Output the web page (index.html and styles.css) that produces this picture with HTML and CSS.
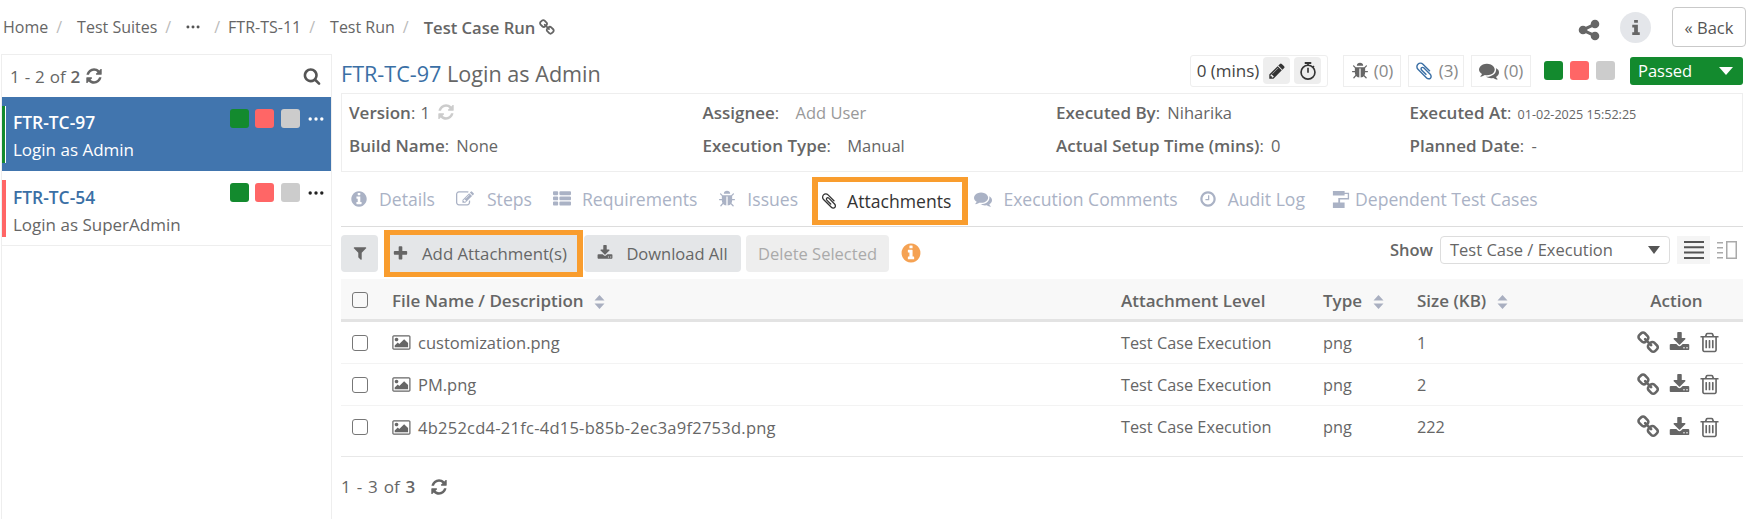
FILE: index.html
```html
<!DOCTYPE html>
<html lang="en">
<head>
    <meta charset="UTF-8">
    <title>Test Case Run</title>
    <link rel="stylesheet" href="styles.css">
</head>
<body>
    <svg class="sprite" xmlns="http://www.w3.org/2000/svg">
        <symbol id="i-search" viewBox="0 0 1792 1792"><path d="M1216 832q0-185-131.5-316.5t-316.5-131.5-316.5 131.5-131.5 316.5 131.5 316.5 316.5 131.5 316.5-131.5 131.5-316.5zm512 832q0 52-38 90t-90 38q-54 0-90-38l-343-342q-179 124-399 124-143 0-273.5-55.5t-225-150-150-225-55.5-273.5 55.5-273.5 150-225 225-150 273.5-55.5 273.5 55.5 225 150 150 225 55.5 273.5q0 220-124 399l343 343q37 37 37 90z"/></symbol>
        <symbol id="i-info" viewBox="0 0 1792 1792"><path d="M1152 1376v-160q0-14-9-23t-23-9h-96v-512q0-14-9-23t-23-9h-320q-14 0-23 9t-9 23v160q0 14 9 23t23 9h96v320h-96q-14 0-23 9t-9 23v160q0 14 9 23t23 9h448q14 0 23-9t9-23zm-128-896v-160q0-14-9-23t-23-9h-192q-14 0-23 9t-9 23v160q0 14 9 23t23 9h192q14 0 23-9t9-23zm640 416q0 209-103 385.5t-279.5 279.5-385.5 103-385.5-103-279.5-279.5-103-385.5 103-385.5 279.5-279.5 385.5-103 385.5 103 279.5 279.5 103 385.5z"/></symbol>
        <symbol id="i-letter" viewBox="0 0 10 16"><path d="M3 0h4v3H3zM1 5h6v8h2v3H1v-3h2V8H1z"/></symbol>
        <symbol id="i-refresh" viewBox="0 0 1792 1792"><path d="M1639 1056q0 5-1 7-64 268-268 434.5t-478 166.5q-146 0-282.5-55t-243.5-157l-129 129q-19 19-45 19t-45-19-19-45v-448q0-26 19-45t45-19h448q26 0 45 19t19 45-19 45l-137 137q71 66 161 102t187 36q134 0 250-65t186-179q11-17 53-117 8-23 30-23h192q13 0 22.5 9.5t9.5 22.5zm25-800v448q0 26-19 45t-45 19h-448q-26 0-45-19t-19-45 19-45l138-138q-148-137-349-137-134 0-250 65t-186 179q-11 17-53 117-8 23-30 23h-199q-13 0-22.5-9.5t-9.5-22.5v-7q65-268 270-434.5t480-166.5q146 0 284 55.5t245 156.5l130-129q19-19 45-19t45 19 19 45z"/></symbol>
        <symbol id="i-plus" viewBox="0 0 1792 1792"><path d="M1600 736v192q0 40-28 68t-68 28h-416v416q0 40-28 68t-68 28h-192q-40 0-68-28t-28-68v-416h-416q-40 0-68-28t-28-68v-192q0-40 28-68t68-28h416v-416q0-40 28-68t68-28h192q40 0 68 28t28 68v416h416q40 0 68 28t28 68z"/></symbol>
        <symbol id="i-filter" viewBox="0 0 1792 1792"><path d="M1595 295q17 41-14 70l-493 493v742q0 42-39 59-13 5-25 5-27 0-45-19l-256-256q-19-19-19-45v-486l-493-493q-31-29-14-70 17-39 59-39h1280q42 0 59 39z"/></symbol>
        <symbol id="i-download" viewBox="0 0 1792 1792"><path d="M1344 1344q0-26-19-45t-45-19-45 19-19 45 19 45 45 19 45-19 19-45zm256 0q0-26-19-45t-45-19-45 19-19 45 19 45 45 19 45-19 19-45zm128-224v320q0 40-28 68t-68 28h-1472q-40 0-68-28t-28-68v-320q0-40 28-68t68-28h465l135 136q58 56 136 56t136-56l136-136h464q40 0 68 28t28 68zm-325-569q17 41-14 70l-448 448q-18 19-45 19t-45-19l-448-448q-31-29-14-70 17-39 59-39h256v-448q0-26 19-45t45-19h256q26 0 45 19t19 45v448h256q42 0 59 39z"/></symbol>
        <symbol id="i-share" viewBox="0 0 1792 1792"><path d="M1344 1024q133 0 226.5 93.5t93.5 226.5-93.5 226.5-226.5 93.5-226.5-93.5-93.5-226.5q0-12 2-34l-360-180q-92 86-218 86-133 0-226.5-93.5t-93.5-226.5 93.5-226.5 226.5-93.5q126 0 218 86l360-180q-2-22-2-34 0-133 93.5-226.5t226.5-93.5 226.5 93.5 93.5 226.5-93.5 226.5-226.5 93.5q-126 0-218-86l-360 180q2 22 2 34t-2 34l360 180q92-86 218-86z"/></symbol>
        <symbol id="i-pencil" viewBox="0 0 1792 1792"><path d="M491 1536l91-91-235-235-91 91v107h128v128h107zm523-928q0-22-22-22-10 0-17 7l-542 542q-7 7-7 17 0 22 22 22 10 0 17-7l542-542q7-7 7-17zm-54-192l416 416-832 832h-416v-416zm683 96q0 53-37 90l-166 166-416-416 166-165q36-38 90-38 53 0 91 38l235 234q37 39 37 91z"/></symbol>
        <symbol id="i-bug" viewBox="0 0 1792 1792"><path d="M1696 960q0 26-19 45t-45 19h-224q0 171-67 290l208 209q19 19 19 45t-19 45q-18 19-45 19t-45-19l-198-197q-5 5-15 13t-42 28.5-65 36.5-82 29-97 13v-896h-128v896q-51 0-101.5-13.5t-87-33-66-39-43.5-32.5l-15-14-183 207q-20 21-48 21-24 0-43-16-19-18-20.5-44.5t15.5-46.5l202-227q-58-114-58-274h-224q-26 0-45-19t-19-45 19-45 45-19h224v-294l-173-173q-19-19-19-45t19-45 45-19 45 19l173 173h844l173-173q19-19 45-19t45 19 19 45-19 45l-173 173v294h224q26 0 45 19t19 45zm-480-576h-640q0-133 93.5-226.5t226.5-93.5 226.5 93.5 93.5 226.5z"/></symbol>
        <symbol id="i-clip" viewBox="0 0 1792 1792"><path d="M1596 1385q0 117-79 196t-196 79q-135 0-235-100l-777-776q-113-115-113-271 0-159 110-270t269-111q158 0 273 113l605 606q10 10 10 22 0 16-30.5 46.5t-46.5 30.5q-13 0-23-10l-606-607q-79-77-181-77-106 0-179 75t-73 181q0 105 76 181l776 777q63 63 145 63 64 0 106-42t42-106q0-82-63-145l-581-581q-26-24-60-24-29 0-48 19t-19 48q0 32 25 59l410 410q10 10 10 22 0 16-31 47t-47 31q-12 0-22-10l-410-410q-63-61-63-149 0-82 57-139t139-57q88 0 149 63l581 581q100 98 100 235z"/></symbol>
        <symbol id="i-comments" viewBox="0 0 1792 1792"><path d="M1408 768q0 139-94 257t-256.5 186.5-353.5 68.5q-86 0-176-16-124 88-278 128-36 9-86 16h-3q-11 0-20.5-8t-11.5-21q-1-3-1-6.5t.5-6.5 2-6l2.5-5 3.5-5.5 4-5 4.5-5 4-4.5q5-6 23-25t26-29.5 22.5-29 25-38.5 20.5-44q-124-72-195-177t-71-224q0-139 94-257t256.5-186.5 353.5-68.5 353.5 68.5 256.5 186.5 94 257zm384 256q0 120-71 224.5t-195 176.5q10 24 20.5 44t25 38.5 22.5 29 26 29.5 23 25q1 1 4 4.5t4.5 5 4 5 3.5 5.5l2.5 5 2 6 .5 6.5-1 6.5q-3 14-13 22t-22 7q-50-7-86-16-154-40-278-128-90 16-176 16-271 0-472-132 58 4 88 4 161 0 309-45t264-129q125-92 192-212t67-254q0-77-23-152 129 71 204 178t75 230z"/></symbol>
        <symbol id="i-edit" viewBox="0 0 1792 1792"><path d="M888 1184l116-116-152-152-116 116v56h96v96h56zm440-720q-16-16-33 1l-350 350q-17 17-1 33t33-1l350-350q17-17 1-33zm80 594v190q0 119-84.5 203.5t-203.5 84.5h-832q-119 0-203.5-84.5t-84.5-203.5v-832q0-119 84.5-203.5t203.5-84.5h832q63 0 117 25 15 7 18 23 3 17-9 29l-49 49q-14 14-32 8-23-6-45-6h-832q-66 0-113 47t-47 113v832q0 66 47 113t113 47h832q66 0 113-47t47-113v-126q0-13 9-22l64-64q15-15 35-7t20 29zm-96-738l288 288-672 672h-288v-288zm444 132l-92 92-288-288 92-92q28-28 68-28t68 28l152 152q28 28 28 68t-28 68z"/></symbol>
        <symbol id="i-thlist" viewBox="0 0 1792 1792"><path d="M512 1248v192q0 40-28 68t-68 28h-320q-40 0-68-28t-28-68v-192q0-40 28-68t68-28h320q40 0 68 28t28 68zm0-512v192q0 40-28 68t-68 28h-320q-40 0-68-28t-28-68v-192q0-40 28-68t68-28h320q40 0 68 28t28 68zm1280 512v192q0 40-28 68t-68 28h-960q-40 0-68-28t-28-68v-192q0-40 28-68t68-28h960q40 0 68 28t28 68zm-1280-1024v192q0 40-28 68t-68 28h-320q-40 0-68-28t-28-68v-192q0-40 28-68t68-28h320q40 0 68 28t28 68zm1280 512v192q0 40-28 68t-68 28h-960q-40 0-68-28t-28-68v-192q0-40 28-68t68-28h960q40 0 68 28t28 68zm0-512v192q0 40-28 68t-68 28h-960q-40 0-68-28t-28-68v-192q0-40 28-68t68-28h960q40 0 68 28t28 68z"/></symbol>
        <symbol id="i-clock" viewBox="0 0 1792 1792"><path d="M1024 544v448q0 14-9 23t-23 9h-320q-14 0-23-9t-9-23v-64q0-14 9-23t23-9h224v-352q0-14 9-23t23-9h64q14 0 23 9t9 23zm416 352q0-148-73-273t-198-198-273-73-273 73-198 198-73 273 73 273 198 198 273 73 273-73 198-198 73-273zm224 0q0 209-103 385.5t-279.5 279.5-385.5 103-385.5-103-279.5-279.5-103-385.5 103-385.5 279.5-279.5 385.5-103 385.5 103 279.5 279.5 103 385.5z"/></symbol>
        <symbol id="i-image" viewBox="0 0 1920 1792"><path d="M576 576q0 80-56 136t-136 56-136-56-56-136 56-136 136-56 136 56 56 136zm1024 384v448h-1408v-192l320-320 160 160 512-512zm96-704h-1600q-13 0-22.5 9.5t-9.5 22.5v1216q0 13 9.5 22.5t22.5 9.5h1600q13 0 22.5-9.5t9.5-22.5v-1216q0-13-9.5-22.5t-22.5-9.5zm160 32v1216q0 66-47 113t-113 47h-1600q-66 0-113-47t-47-113v-1216q0-66 47-113t113-47h1600q66 0 113 47t47 113z"/></symbol>
        <symbol id="i-trash" viewBox="0 0 1792 1792"><path d="M704 736v576q0 14-9 23t-23 9h-64q-14 0-23-9t-9-23v-576q0-14 9-23t23-9h64q14 0 23 9t9 23zm256 0v576q0 14-9 23t-23 9h-64q-14 0-23-9t-9-23v-576q0-14 9-23t23-9h64q14 0 23 9t9 23zm256 0v576q0 14-9 23t-23 9h-64q-14 0-23-9t-9-23v-576q0-14 9-23t23-9h64q14 0 23 9t9 23zm128 724v-948h-896v948q0 22 7 40.5t14.5 27 10.5 8.5h832q3 0 10.5-8.5t14.5-27 7-40.5zm-672-1076h448l-48-117q-7-9-17-11h-317q-10 2-17 11zm928 32v64q0 14-9 23t-23 9h-96v948q0 83-47 143.5t-113 60.5h-832q-66 0-113-58.5t-47-141.5v-952h-96q-14 0-23-9t-9-23v-64q0-14 9-23t23-9h309l70-167q15-37 54-63t79-26h320q40 0 79 26t54 63l70 167h309q14 0 23 9t9 23z"/></symbol>
        <symbol id="i-link" viewBox="0 0 1792 1792"><path d="M1456 1216q0-40-28-68l-208-208q-28-28-68-28-42 0-72 32 3 3 19 18.5t21.5 21.5 15 19 13 25.5 3.5 27.5q0 40-28 68t-68 28q-15 0-27.5-3.5t-25.5-13-19-15-21.5-21.5-18.5-19q-33 31-33 73 0 40 28 68l206 207q27 27 68 27 40 0 68-26l147-146q28-28 28-67zm-703-705q0-40-28-68l-206-207q-28-28-68-28-39 0-68 27l-147 146q-28 28-28 67 0 40 28 68l208 208q27 27 68 27 42 0 72-31-3-3-19-18.5t-21.5-21.5-15-19-13-25.5-3.5-27.5q0-40 28-68t68-28q15 0 27.5 3.5t25.5 13 19 15 21.5 21.5 18.5 19q33-31 33-73zm895 705q0 120-85 203l-147 146q-83 83-203 83-121 0-204-85l-206-207q-83-83-83-203 0-123 88-209l-88-88q-86 88-208 88-120 0-204-84l-208-208q-84-84-84-204t85-203l147-146q83-83 203-83 121 0 204 85l206 207q83 83 83 203 0 123-88 209l88 88q86-88 208-88 120 0 204 84l208 208q84 84 84 204z"/></symbol>
        <symbol id="i-dots" viewBox="0 0 16 6"><circle cx="2.200" cy="3" r="1.700"/><circle cx="8" cy="3" r="1.700"/><circle cx="13.800" cy="3" r="1.700"/></symbol>
        <symbol id="i-sort" viewBox="0 0 10 14"><path d="M5 0l5 5.500H0zM5 14L0 8.500h10z"/></symbol>
        <symbol id="i-timer" viewBox="0 0 20 22"><path d="M6 0h8v2.500H6zM9 2h2v2H9z"/><path d="M16.500 4.300l1.500 1.500-1.300 1.300-1.500-1.500z"/><path fill-rule="evenodd" d="M10 3a9.500 9.500 0 1 0 0 19 9.500 9.500 0 0 0 0-19zm0 2a7.500 7.500 0 1 1 0 15 7.500 7.500 0 0 1 0-15z"/><path d="M9 7h2v6H9z"/></symbol>
        <symbol id="i-flow" viewBox="0 0 18 20"><path d="M0 1h13v5H0zM13 3h5v7.500H6V9h10.500V4.500H13zM6 10h2v4H6zM0 14h13v6H0z"/></symbol>
        <symbol id="i-lines" viewBox="0 0 20 18"><path d="M0 0h20v2H0zM0 5.300h20v2H0zM0 10.600h20v2H0zM0 16h20v2H0z"/></symbol>
        <symbol id="i-split" viewBox="0 0 20 18"><path d="M0 1h6v1.500H0zM0 6h6v1.500H0zM0 11h6v1.500H0zM0 16h6v1.500H0z"/><path fill-rule="evenodd" d="M9 0h11v18H9zm1.500 1.500v15h8v-15z"/></symbol>
    </svg>

    <header class="topbar">
        <nav class="crumbs">
            <a>Home</a><span class="sep">/</span>
            <a>Test Suites</a><span class="sep">/</span>
            <svg class="ic crumb-dots"><use href="#i-dots"/></svg><span class="sep sep-tight">/</span>
            <a>FTR-TS-11</a><span class="sep">/</span>
            <a>Test Run</a><span class="sep">/</span>
            <b>Test Case Run</b>
            <svg class="ic crumb-link"><use href="#i-link"/></svg>
        </nav>
        <div class="top-actions">
            <svg class="ic share"><use href="#i-share"/></svg>
            <span class="round-info"><svg class="ic"><use href="#i-letter"/></svg></span>
            <button class="back-btn">« Back</button>
        </div>
    </header>

    <div class="layout">
        <aside class="sidebar">
            <div class="side-head">
                <span>1 - 2 of <b>2</b> <svg class="ic side-refresh"><use href="#i-refresh"/></svg></span>
                <svg class="ic side-search"><use href="#i-search"/></svg>
            </div>
            <div class="case active">
                <span class="stripe stripe-pass"></span>
                <div class="case-text">
                    <a class="case-key">FTR-TC-97</a>
                    <span class="case-name">Login as Admin</span>
                </div>
                <div class="case-marks">
                    <span class="sq sq-green"></span><span class="sq sq-red"></span><span class="sq sq-grey"></span>
                    <svg class="ic case-dots"><use href="#i-dots"/></svg>
                </div>
            </div>
            <div class="case">
                <span class="stripe stripe-fail"></span>
                <div class="case-text">
                    <a class="case-key">FTR-TC-54</a>
                    <span class="case-name">Login as SuperAdmin</span>
                </div>
                <div class="case-marks">
                    <span class="sq sq-green"></span><span class="sq sq-red"></span><span class="sq sq-grey"></span>
                    <svg class="ic case-dots"><use href="#i-dots"/></svg>
                </div>
            </div>
        </aside>

        <main class="content">
            <div class="title-row">
                <h1><a>FTR-TC-97</a> Login as Admin</h1>
                <div class="title-tools">
                    <div class="mins-box">
                        <span>0 (mins)</span>
                        <span class="mini-btn"><svg class="ic"><use href="#i-pencil"/></svg></span>
                        <span class="mini-btn"><svg class="ic"><use href="#i-timer"/></svg></span>
                    </div>
                    <span class="count-box box-bug"><svg class="ic"><use href="#i-bug"/></svg> (0)</span>
                    <span class="count-box box-clip"><svg class="ic ic-blue"><use href="#i-clip"/></svg> (3)</span>
                    <span class="count-box box-comment"><svg class="ic"><use href="#i-comments"/></svg> (0)</span>
                    <div class="status-squares">
                        <span class="sq sq-green"></span><span class="sq sq-red"></span><span class="sq sq-grey"></span>
                    </div>
                    <div class="status-select">Passed <span class="caret-white"></span></div>
                </div>
            </div>

            <section class="info-box">
                <div><b>Version</b>: <span class="val val-version">1</span> <svg class="ic ver-refresh"><use href="#i-refresh"/></svg></div>
                <div><b>Assignee</b>: <span class="val val-light">Add User</span></div>
                <div><b>Executed By</b>: <span class="val val-gap">Niharika</span></div>
                <div><b>Executed At</b>: <span class="val val-small">01-02-2025 15:52:25</span></div>
                <div><b>Build Name</b>: <span class="val val-gap">None</span></div>
                <div><b>Execution Type</b>: <span class="val val-type">Manual</span></div>
                <div><b>Actual Setup Time (mins)</b>: <span class="val val-gap">0</span></div>
                <div><b>Planned Date</b>: <span class="val val-gap">-</span></div>
            </section>

            <nav class="tabs">
                <a class="tab"><svg class="ic"><use href="#i-info"/></svg>Details</a>
                <a class="tab tab-steps"><svg class="ic"><use href="#i-edit"/></svg>Steps</a>
                <a class="tab"><svg class="ic"><use href="#i-thlist"/></svg>Requirements</a>
                <a class="tab"><svg class="ic"><use href="#i-bug"/></svg>Issues</a>
                <a class="tab tab-active"><svg class="ic"><use href="#i-clip"/></svg>Attachments</a>
                <a class="tab"><svg class="ic"><use href="#i-comments"/></svg>Execution Comments</a>
                <a class="tab tab-audit"><svg class="ic"><use href="#i-clock"/></svg>Audit Log</a>
                <a class="tab tab-dep"><svg class="ic"><use href="#i-flow"/></svg>Dependent Test Cases</a>
            </nav>

            <div class="toolbar">
                <button class="btn btn-filter"><svg class="ic"><use href="#i-filter"/></svg></button>
                <button class="btn btn-add"><svg class="ic"><use href="#i-plus"/></svg>Add Attachment(s)</button>
                <button class="btn btn-dl"><svg class="ic"><use href="#i-download"/></svg>Download All</button>
                <button class="btn btn-del">Delete Selected</button>
                <svg class="ic tool-info"><use href="#i-info"/></svg>
                <div class="show-wrap">
                    <b>Show</b>
                    <div class="show-select">Test Case / Execution <span class="caret-dark"></span></div>
                    <span class="view-btn view-on"><svg class="ic"><use href="#i-lines"/></svg></span>
                    <span class="view-btn"><svg class="ic"><use href="#i-split"/></svg></span>
                </div>
            </div>

            <table class="files">
                <thead>
                    <tr>
                        <th class="col-check"><span class="check"></span></th>
                        <th class="col-name">File Name / Description <svg class="ic sort"><use href="#i-sort"/></svg></th>
                        <th class="col-level">Attachment Level</th>
                        <th class="col-type">Type <svg class="ic sort"><use href="#i-sort"/></svg></th>
                        <th class="col-size">Size (KB) <svg class="ic sort"><use href="#i-sort"/></svg></th>
                        <th class="col-action">Action</th>
                    </tr>
                </thead>
                <tbody>
                    <tr>
                        <td><span class="check"></span></td>
                        <td class="file-cell"><svg class="ic file-ic"><use href="#i-image"/></svg>customization.png</td>
                        <td>Test Case Execution</td>
                        <td>png</td>
                        <td>1</td>
                        <td class="act-cell"><svg class="ic act-link"><use href="#i-link"/></svg><svg class="ic act-dl"><use href="#i-download"/></svg><svg class="ic act-trash"><use href="#i-trash"/></svg></td>
                    </tr>
                    <tr>
                        <td><span class="check"></span></td>
                        <td class="file-cell"><svg class="ic file-ic"><use href="#i-image"/></svg>PM.png</td>
                        <td>Test Case Execution</td>
                        <td>png</td>
                        <td>2</td>
                        <td class="act-cell"><svg class="ic act-link"><use href="#i-link"/></svg><svg class="ic act-dl"><use href="#i-download"/></svg><svg class="ic act-trash"><use href="#i-trash"/></svg></td>
                    </tr>
                    <tr class="last-row">
                        <td><span class="check"></span></td>
                        <td class="file-cell file-long"><svg class="ic file-ic"><use href="#i-image"/></svg>4b252cd4-21fc-4d15-b85b-2ec3a9f2753d.png</td>
                        <td>Test Case Execution</td>
                        <td>png</td>
                        <td>222</td>
                        <td class="act-cell"><svg class="ic act-link"><use href="#i-link"/></svg><svg class="ic act-dl"><use href="#i-download"/></svg><svg class="ic act-trash"><use href="#i-trash"/></svg></td>
                    </tr>
                </tbody>
            </table>

            <div class="pager">1 - 3 of <b>3</b> <svg class="ic pager-refresh"><use href="#i-refresh"/></svg></div>
        </main>
    </div>
</body>
</html>
```

FILE: styles.css
```css
/* General Styles */
body {
    margin: 0;
    height: 519px;
    overflow: hidden;
    background-color: #fff;
    color: #666;
    font-family: "Open Sans", Arial, sans-serif;
    font-size: 16.5px;
}

.sprite {
    display: none;
}

.ic {
    width: 16px;
    height: 16px;
    fill: currentColor;
    vertical-align: -2px;
}

b {
    font-weight: 600;
}

/* Top bar */
.topbar {
    height: 54px;
    display: flex;
    justify-content: space-between;
    align-items: center;
    padding: 0 9px 0 3px;
    box-sizing: border-box;
}

.crumbs {
    display: flex;
    align-items: center;
    font-size: 16px;
}

.crumbs b {
    font-size: 16.6px;
}

.sep {
    color: #bbb;
    margin: 0 15px 0 8px;
}

.sep-tight {
    margin-right: 8px;
}

.crumb-dots {
    width: 14px;
    height: 6px;
    color: #555;
    margin-right: 6px;
}

.crumb-link {
    width: 17px;
    height: 17px;
    margin-left: 4px;
}

.top-actions {
    display: flex;
    align-items: center;
}

.share {
    width: 24px;
    height: 24px;
    margin: 6px 19px 0 0;
}

.round-info {
    width: 31px;
    height: 31px;
    border-radius: 50%;
    background-color: #e4e6ea;
    display: flex;
    align-items: center;
    justify-content: center;
    margin-right: 21px;
}

.round-info .ic {
    width: 10px;
    height: 15px;
}

.back-btn {
    width: 74px;
    height: 40px;
    border: 1px solid #c9c9c9;
    border-radius: 4px;
    background-color: #fff;
    color: #555;
    font: inherit;
    padding: 0;
}

/* Layout */
.layout {
    display: flex;
    height: 465px;
}

.sidebar {
    width: 331px;
    margin-left: 1px;
    border: 1px solid #eee;
    border-bottom: none;
    box-sizing: border-box;
    flex-shrink: 0;
}

.side-head {
    height: 42px;
    display: flex;
    justify-content: space-between;
    align-items: center;
    padding: 0 10px 0 8px;
    font-size: 17px;
    word-spacing: 0.5px;
}

.side-refresh {
    width: 18px;
    height: 18px;
}

.side-search {
    width: 18px;
    height: 18px;
    color: #555;
}

.case {
    height: 74px;
    display: flex;
    align-items: center;
    border-bottom: 1px solid #eee;
    box-sizing: border-box;
}

.case + .case {
    height: 75px;
}

.case + .case .case-text {
    padding-top: 4px;
    gap: 4px;
}

.case.active {
    background-color: #4175ae;
    color: #fff;
    border-bottom: none;
}

.stripe {
    width: 4px;
    height: 57px;
    flex-shrink: 0;
}

.stripe-pass {
    width: 3px;
    background-color: #138a2e;
    border-right: 1px solid #fff;
}

.stripe-fail {
    background-color: #ff6666;
}

.case-text {
    flex: 1;
    display: flex;
    flex-direction: column;
    padding-left: 7px;
    gap: 4px;
    font-size: 17px;
    padding-top: 2px;
}

.case-key {
    font-weight: 600;
    color: #3a6fa5;
    font-size: 17.4px;
}

.case.active .case-key {
    color: #fff;
}

.case-marks {
    display: flex;
    align-items: center;
    gap: 6.5px;
    align-self: flex-start;
    padding: 12px 7px 0 0;
}

.sq {
    width: 19px;
    height: 19px;
    border-radius: 3px;
    display: block;
}

.sq-green {
    background-color: #138a2e;
}

.sq-red {
    background-color: #ff6666;
}

.sq-grey {
    background-color: #ccc;
}

.case-dots {
    width: 16px;
    height: 6px;
    color: #222;
    margin-left: 2px;
}

.case.active .case-dots {
    color: #fff;
}

/* Main content */
.content {
    flex: 1;
    padding: 0 12px 0 9px;
    min-width: 0;
}

.title-row {
    height: 39px;
    display: flex;
    justify-content: space-between;
    align-items: center;
}

h1 {
    margin: 0;
    font-size: 21.6px;
    font-weight: 500;
    color: #666;
}

h1 a {
    color: #3a6fa5;
}

.title-tools {
    display: flex;
    align-items: center;
    margin-bottom: 6px;
}

.mins-box,
.count-box {
    height: 32px;
    border: 1px solid #eee;
    box-sizing: border-box;
    display: flex;
    align-items: center;
    gap: 5px;
    justify-content: center;
    color: #888;
    font-size: 17px;
}

.count-box .ic {
    width: 18px;
    height: 18px;
    color: #666;
}

.count-box .ic-blue {
    width: 20px;
    height: 20px;
    color: #3a6fa5;
}

.mins-box {
    width: 138px;
    border-radius: 3px;
    gap: 4px;
    color: #444;
    margin-right: 15px;
}

.mini-btn {
    width: 27px;
    height: 27px;
    background-color: #eee;
    border-radius: 4px;
    display: flex;
    align-items: center;
    justify-content: center;
    color: #333;
}

.mini-btn .ic {
    width: 18px;
    height: 18px;
}

.box-bug {
    width: 58px;
    margin-right: 7px;
}

.box-clip {
    width: 56px;
    margin-right: 7px;
}

.box-comment {
    width: 60px;
    margin-right: 13px;
}

.box-comment .ic {
    width: 20px;
    height: 20px;
}

.status-squares {
    display: flex;
    gap: 7px;
    margin-right: 15px;
}

.status-select {
    width: 113px;
    height: 28px;
    background-color: #138a2e;
    color: #fff;
    border-radius: 3px;
    display: flex;
    align-items: center;
    justify-content: space-between;
    padding: 0 10px 0 8px;
    box-sizing: border-box;
}

.caret-white {
    border-top: 8px solid #fff;
    border-left: 7px solid transparent;
    border-right: 7px solid transparent;
}

.info-box {
    height: 79px;
    border: 1px solid #eee;
    box-sizing: border-box;
    display: grid;
    grid-template-columns: repeat(4, 353.5px);
    grid-auto-rows: 33px;
    padding: 2px 0 0 7px;
    align-items: center;
    white-space: nowrap;
    overflow: hidden;
}

.info-box b {
    font-size: 17px;
}

.val-version {
    margin-left: 1px;
}

.val-light {
    color: #999;
    margin-left: 12px;
}

.val-type {
    margin-left: 12px;
}

.val-gap {
    margin-left: 3px;
}

.val-small {
    font-size: 12.6px;
    margin-left: 2px;
}

.ver-refresh {
    width: 18px;
    height: 18px;
    color: #ccc;
    margin-left: 3px;
}

.tabs {
    height: 55px;
    border-bottom: 1px solid #ddd;
    box-sizing: border-box;
    display: flex;
    align-items: center;
    padding-left: 9px;
    font-size: 17.6px;
}

.tab {
    color: #aab2c5;
    display: flex;
    align-items: center;
    margin-right: 21px;
    white-space: nowrap;
}

.tab .ic {
    width: 18px;
    height: 18px;
    margin-right: 11px;
}

.tab-steps .ic {
    margin-right: 13px;
}

.tab-active {
    color: #333;
    border: solid #f99d2e;
    border-width: 5px 6px;
    height: 38px;
    padding: 0 11px 0 2px;
    margin: 3px 6px 0 -7px;
}

.tab-active .ic {
    margin-right: 9px;
}

.tab-audit {
    margin-right: 27px;
}

.tab-dep {
    margin-right: 0;
}

.tab-dep .ic {
    margin-right: 5px;
}

.toolbar {
    height: 52px;
    display: flex;
    align-items: center;
}

.btn {
    height: 37px;
    border: none;
    border-radius: 4px;
    background-color: #e4e6e8;
    color: #666;
    font: inherit;
    padding: 0;
    display: flex;
    align-items: center;
    justify-content: center;
    box-sizing: content-box;
}

.btn-filter {
    width: 37px;
    margin-right: 6px;
}

.btn-add {
    width: 187px;
    border: solid #f99d2e;
    border-width: 5px 6px;
    border-radius: 0;
    margin-right: 1px;
    justify-content: flex-start;
    font-size: 16.8px;
}

.btn-add .ic {
    width: 17px;
    height: 17px;
    margin: 0 13px 0 2px;
}

.btn-dl {
    width: 157px;
    margin-right: 5px;
}

.btn-dl .ic {
    margin-right: 13px;
}

.btn-del {
    width: 143px;
    color: #aaa;
    background-color: #eee;
}

.tool-info {
    width: 22px;
    height: 22px;
    margin-left: 11px;
    color: #f5a253;
}

.show-wrap {
    margin-left: auto;
    display: flex;
    align-items: center;
    height: 28px;
    margin-top: -7px;
}

.show-select {
    width: 230px;
    height: 28px;
    border: 1px solid #ddd;
    border-radius: 4px;
    box-sizing: border-box;
    display: flex;
    align-items: center;
    justify-content: space-between;
    padding: 0 9px;
    margin: 0 7px;
}

.caret-dark {
    border-top: 8px solid #555;
    border-left: 6px solid transparent;
    border-right: 6px solid transparent;
}

.view-btn {
    width: 33px;
    height: 28px;
    display: flex;
    align-items: center;
    justify-content: center;
    color: #aaa;
}

.view-on {
    background-color: #f5f5f5;
    color: #555;
}

.view-btn .ic {
    width: 20px;
    height: 18px;
}

/* Table */
.files {
    width: 100%;
    border-collapse: collapse;
    table-layout: fixed;
}

.files th {
    height: 38px;
    background-color: #f8f8f8;
    border-bottom: 3px solid #e3e3e3;
    text-align: left;
    font-weight: 600;
    font-size: 17px;
    padding: 2px 0 0;
}

.files td {
    height: 41px;
    padding: 0;
    border-bottom: 1px solid #f3f3f3;
    font-size: 16.3px;
}

.files .file-cell {
    font-size: 16.5px;
}

.files .last-row td {
    height: 42px;
    border-bottom: 1px solid #e8e8e8;
    padding-bottom: 8px;
}

.col-check {
    width: 51px;
}

.col-name {
    width: 729px;
}

.col-level {
    width: 202px;
}

.col-type {
    width: 94px;
}

.col-size {
    width: 193px;
}

.files .col-action {
    text-align: center;
}

.check {
    display: block;
    width: 14px;
    height: 14px;
    border: 1.5px solid #777;
    border-radius: 3px;
    margin-left: 11px;
}

.sort {
    width: 11px;
    height: 14px;
    color: #a9afc0;
    margin-left: 6px;
}

.file-ic {
    width: 20px;
    height: 17px;
    margin-right: 6px;
}

.file-long {
    letter-spacing: 0.25px;
}

.files .act-cell {
    text-align: center;
    padding-left: 5px;
    white-space: nowrap;
}

.act-cell .ic {
    vertical-align: middle;
}

.act-link {
    width: 24px;
    height: 24px;
}

.act-cell .act-dl {
    width: 21px;
    height: 21px;
    margin: 0 8px;
}

.act-trash {
    width: 23px;
    height: 23px;
}

.pager {
    margin-top: 18px;
    font-size: 17px;
    word-spacing: 1.5px;
}

.pager-refresh {
    width: 18px;
    height: 18px;
    margin-left: 9px;
    vertical-align: -3px;
}
```
